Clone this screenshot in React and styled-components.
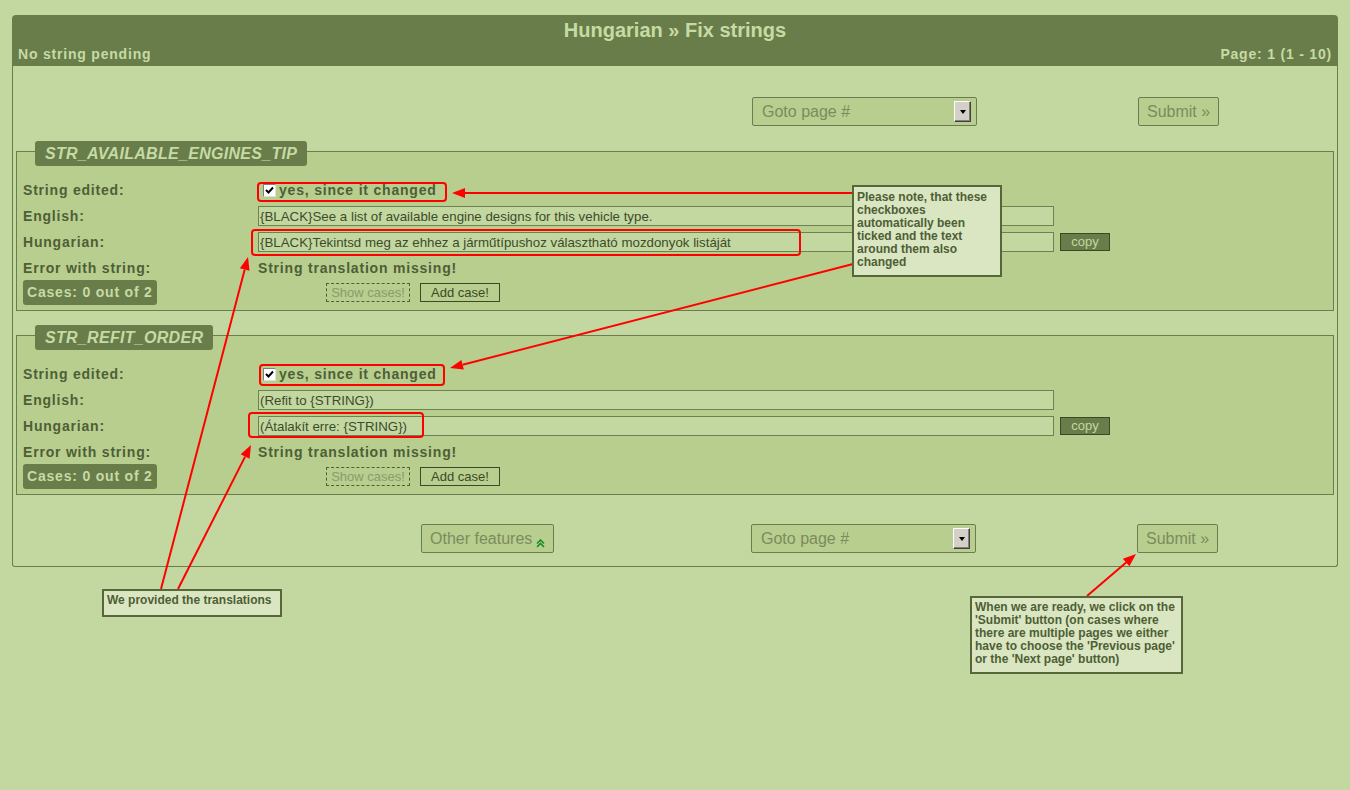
import React from 'react';
import styled, { createGlobalStyle } from 'styled-components';

const Global = createGlobalStyle`
  html, body { margin: 0; padding: 0; background: #c3d8a0; }
  body { font-family: "Liberation Sans", Arial, sans-serif; }
  * { box-sizing: border-box; }
`;

const Page = styled.div`
  position: relative;
  width: 1350px;
  min-height: 790px;
  padding: 15px 12px 0;
`;

const Panel = styled.section`
  width: 1326px;
`;

const Header = styled.header`
  height: 51px;
  background: #697d4b;
  border-radius: 4px 4px 0 0;
  padding: 2px 6px 3px;
  color: #c6dba3;
`;

const Title = styled.h1`
  margin: 0;
  font: bold 20px/26px "Liberation Sans", Arial, sans-serif;
  text-align: center;
`;

const SubRow = styled.div`
  display: flex;
  justify-content: space-between;
  margin-top: 2px;
  font: bold 14px/18px "Liberation Sans", Arial, sans-serif;
  letter-spacing: 0.8px;
`;

const Body = styled.div`
  border: 1px solid #697d4b;
  border-top: none;
  border-radius: 0 0 3px 3px;
  padding: 31px 0 13px;
`;

const Toolbar = styled.div`
  display: grid;
  grid-template-columns: 408px 330px 386px auto;
  height: 29px;
  padding-left: ${p => p.$shift || 0}px;
`;

const Cell = styled.div`
  display: flex;
`;

const Button = styled.button`
  height: 29px;
  padding: 0 8px;
  margin: 0;
  background: #b8ce8e;
  border: 1px solid #6b7d4e;
  border-radius: 2px;
  color: #7b8b5f;
  font: 16px/27px "Liberation Sans", Arial, sans-serif;
  display: inline-flex;
  align-items: center;
  gap: 4px;
  cursor: pointer;
`;

const Chevron = styled.svg`
  align-self: flex-end;
  margin-bottom: 4px;
`;

const SelectBox = styled.div`
  width: 225px;
  height: 29px;
  background: #b8ce8e;
  border: 1px solid #6b7d4e;
  border-radius: 2px;
  display: flex;
  align-items: center;
  justify-content: space-between;
  padding: 0 5px 0 9px;
  color: #7b8b5f;
  font: 16px "Liberation Sans", Arial, sans-serif;
`;

const DropBtn = styled.span`
  width: 17px;
  height: 21px;
  background: #d4d0c8;
  border-top: 1px solid #ffffff;
  border-left: 1px solid #ffffff;
  border-right: 1px solid #404040;
  border-bottom: 1px solid #404040;
  box-shadow: inset -1px -1px 0 #808080;
  display: flex;
  align-items: center;
  justify-content: center;
  &::after {
    content: "";
    border-left: 3.5px solid transparent;
    border-right: 3.5px solid transparent;
    border-top: 4px solid #000;
  }
`;

const Groups = styled.div`
  display: flex;
  flex-direction: column;
  gap: 24px;
  margin: 25px 3px 29px;
`;

const Fieldset = styled.div`
  display: flex;
  flex-direction: column;
  border: 1px solid #6b7d4e;
  background: #b8ce8e;
  padding: 0 6px 5px;
`;

const Legend = styled.div`
  align-self: flex-start;
  margin: -11px 0 11px 12px;
  height: 25px;
  padding: 0 10px;
  background: #697d4b;
  border-radius: 3px;
  color: #c6dba3;
  font: italic bold 16px/25px "Liberation Sans", Arial, sans-serif;
  letter-spacing: 0.3px;
`;

const Row = styled.div`
  display: grid;
  grid-template-columns: 235px 1fr;
  align-items: center;
  height: ${p => p.$h || 26}px;
`;

const Label = styled.div`
  font: bold 14px/18px "Liberation Sans", Arial, sans-serif;
  letter-spacing: 0.8px;
  color: #4e5e37;
`;

const Value = styled.div`
  display: flex;
  align-items: center;
  gap: ${p => p.$gap || 6}px;
  padding-left: ${p => p.$pad || 0}px;
`;

const Check = styled.span`
  width: 13px;
  height: 13px;
  margin-left: 5px;
  margin-right: -1px;
  background: #fff;
  border-top: 1px solid #808080;
  border-left: 1px solid #808080;
  border-right: 1px solid #e0e0e0;
  border-bottom: 1px solid #e0e0e0;
  display: flex;
  align-items: center;
  justify-content: center;
`;

const TextInput = styled.input`
  width: 796px;
  height: 20px;
  margin: 0;
  padding: 0 1px;
  background: #c3d8a0;
  border: 1px solid #6e8151;
  color: #3e4b2b;
  font: 13.3px "Liberation Sans", Arial, sans-serif;
  outline: none;
`;

const CopyBtn = styled.button`
  width: 50px;
  height: 18px;
  margin: 0;
  padding: 0;
  background: #697d4b;
  border: 1px solid #3b4a26;
  color: #c3d8a0;
  font: 13px/16px "Liberation Sans", Arial, sans-serif;
`;

const Badge = styled.div`
  width: 134px;
  height: 25px;
  background: #697d4b;
  border-radius: 3px;
  color: #c6dba3;
  font: bold 14px/25px "Liberation Sans", Arial, sans-serif;
  letter-spacing: 0.8px;
  padding-left: 4px;
`;

const SmallBtn = styled.button`
  height: 19px;
  margin: 0;
  padding: 0 4px;
  background: #b8ce8e;
  border: 1px ${p => (p.$dashed ? 'dashed #4e5e37' : 'solid #3b4a26')};
  color: ${p => (p.$dashed ? '#8a9b6c' : '#3b4a26')};
  font: 13px/17px "Liberation Sans", Arial, sans-serif;
  width: ${p => p.$w}px;
`;

const Overlay = styled.svg`
  position: absolute;
  left: 0;
  top: 0;
  pointer-events: none;
`;

const Note = styled.div`
  position: absolute;
  left: ${p => p.$x}px;
  top: ${p => p.$y}px;
  width: ${p => p.$w}px;
  height: ${p => p.$h}px;
  background: #d9e6c1;
  border: 2px solid #56673a;
  padding: ${p => p.$pt || 3}px 3px 0;
  color: #4e5e35;
  font: bold 12px/13px "Liberation Sans", Arial, sans-serif;
  white-space: pre-line;
`;

function Arrow({ x1, y1, x2, y2 }) {
  const dx = x2 - x1;
  const dy = y2 - y1;
  const len = Math.hypot(dx, dy);
  const ux = dx / len;
  const uy = dy / len;
  const hl = 13;
  const hw = 5;
  const bx = x2 - ux * hl;
  const by = y2 - uy * hl;
  const px = -uy * hw;
  const py = ux * hw;
  return (
    <g>
      <line x1={x1} y1={y1} x2={bx} y2={by} stroke="#ff0000" strokeWidth="2" />
      <polygon
        points={`${x2},${y2} ${bx + px},${by + py} ${bx - px},${by - py}`}
        fill="#ff0000"
      />
    </g>
  );
}

const CheckMark = () => (
  <svg width="9" height="9" viewBox="0 0 9 9">
    <path d="M1 4 L3.5 6.5 L8 1.5" stroke="#000" strokeWidth="2" fill="none" />
  </svg>
);

const strings = [
  {
    id: 'STR_AVAILABLE_ENGINES_TIP',
    en: '{BLACK}See a list of available engine designs for this vehicle type.',
    hu: '{BLACK}Tekintsd meg az ehhez a járműtípushoz választható mozdonyok listáját',
  },
  {
    id: 'STR_REFIT_ORDER',
    en: '(Refit to {STRING})',
    hu: '(Átalakít erre: {STRING})',
  },
];

function StringGroup({ s }) {
  return (
    <Fieldset>
      <Legend>{s.id}</Legend>
      <Row>
        <Label>String edited:</Label>
        <Value $gap={4}>
          <Check>
            <CheckMark />
          </Check>
          <Label>yes, since it changed</Label>
        </Value>
      </Row>
      <Row>
        <Label>English:</Label>
        <Value>
          <TextInput readOnly value={s.en} />
        </Value>
      </Row>
      <Row>
        <Label>Hungarian:</Label>
        <Value>
          <TextInput readOnly value={s.hu} />
          <CopyBtn>copy</CopyBtn>
        </Value>
      </Row>
      <Row $h={25}>
        <Label>Error with string:</Label>
        <Label>String translation missing!</Label>
      </Row>
      <Row $h={25}>
        <Badge>Cases: 0 out of 2</Badge>
        <Value $gap={10} $pad={68}>
          <SmallBtn $dashed $w={84}>Show cases!</SmallBtn>
          <SmallBtn $w={80}>Add case!</SmallBtn>
        </Value>
      </Row>
    </Fieldset>
  );
}

export default function App() {
  return (
    <>
      <Global />
      <Page>
        <Panel>
          <Header>
            <Title>Hungarian » Fix strings</Title>
            <SubRow>
              <span>No string pending</span>
              <span>Page: 1 (1 - 10)</span>
            </SubRow>
          </Header>
          <Body>
            <Toolbar $shift={1}>
              <Cell />
              <Cell />
              <Cell>
                <SelectBox>
                  <span>Goto page #</span>
                  <DropBtn />
                </SelectBox>
              </Cell>
              <Cell>
                <Button>Submit »</Button>
              </Cell>
            </Toolbar>
            <Groups>
              {strings.map(s => (
                <StringGroup key={s.id} s={s} />
              ))}
            </Groups>
            <Toolbar>
              <Cell />
              <Cell>
                <Button>
                  Other features
                  <Chevron width="9" height="9" viewBox="0 0 9 9">
                    <path d="M1 4.5 L4.5 1 L8 4.5 M1 8 L4.5 4.5 L8 8" stroke="#1b8a2b" strokeWidth="1.6" fill="none" />
                  </Chevron>
                </Button>
              </Cell>
              <Cell>
                <SelectBox>
                  <span>Goto page #</span>
                  <DropBtn />
                </SelectBox>
              </Cell>
              <Cell>
                <Button>Submit »</Button>
              </Cell>
            </Toolbar>
          </Body>
        </Panel>

        <Overlay width="1350" height="790" viewBox="0 0 1350 790">
          <g fill="none" stroke="#ff0000" strokeWidth="2">
            <rect x="258" y="183" width="188" height="18" rx="3" />
            <rect x="252" y="230" width="548" height="25" rx="3" />
            <rect x="260" y="365" width="184" height="20" rx="3" />
            <rect x="249" y="413" width="174" height="24" rx="3" />
          </g>
          <Arrow x1={853} y1={193} x2={452} y2={193} />
          <Arrow x1={853} y1={264} x2={450} y2={368} />
          <Arrow x1={161} y1={589} x2={248} y2={257} />
          <Arrow x1={178} y1={589} x2={251} y2={445} />
          <Arrow x1={1087} y1={596} x2={1136} y2={554} />
        </Overlay>

        <Note $x={852} $y={185} $w={150} $h={92} $pt={4}>
          {'Please note, that these\ncheckboxes\nautomatically been\nticked and the text\naround them also\nchanged'}
        </Note>
        <Note $x={102} $y={589} $w={180} $h={28} $pt={3}>
          We provided the translations
        </Note>
        <Note $x={970} $y={596} $w={213} $h={78} $pt={3}>
          {"When we are ready, we click on the\n'Submit' button (on cases where\nthere are multiple pages we either\nhave to choose the 'Previous page'\nor the 'Next page' button)"}
        </Note>
      </Page>
    </>
  );
}
